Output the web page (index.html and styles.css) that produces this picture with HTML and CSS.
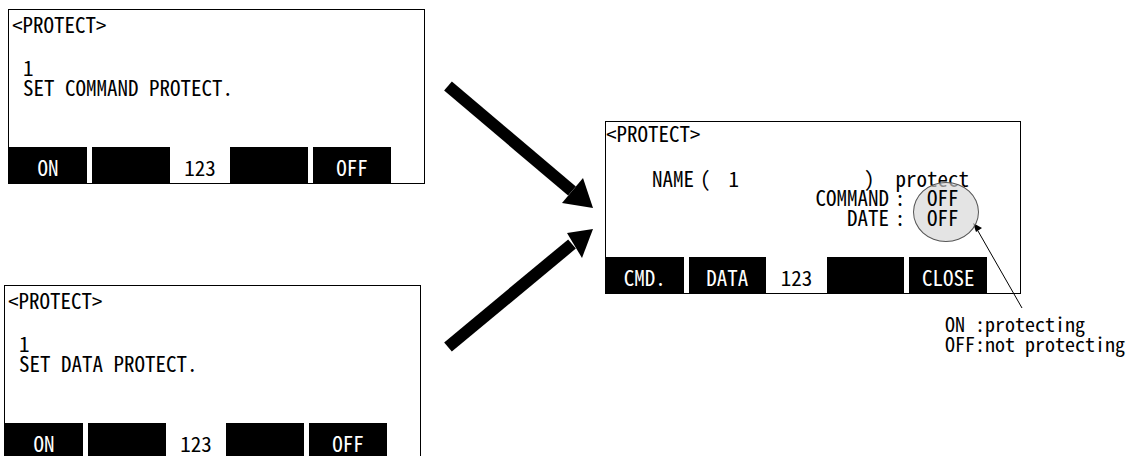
FILE: index.html
```html
<!DOCTYPE html>
<html>
  <head>
    <meta charset="utf-8" />
    <title>PROTECT</title>
    <link rel="stylesheet" href="styles.css">
  </head>

  <body>
    <div id="canvas">
      <!-- command protect screen -->
      <section class="panel" id="panel-cmd">
        <div class="screen">
          <div class="title">&lt;PROTECT&gt;</div>
          <div class="msg">
            <div>1</div>
            <div>SET COMMAND PROTECT.</div>
          </div>
        </div>
        <div class="keys">
          <span class="key">ON</span>
          <span class="key"></span>
          <span class="key num">123</span>
          <span class="key"></span>
          <span class="key">OFF</span>
        </div>
      </section>

      <!-- data protect screen -->
      <section class="panel" id="panel-data">
        <div class="screen">
          <div class="title">&lt;PROTECT&gt;</div>
          <div class="msg">
            <div>1</div>
            <div>SET DATA PROTECT.</div>
          </div>
        </div>
        <div class="keys">
          <span class="key">ON</span>
          <span class="key"></span>
          <span class="key num">123</span>
          <span class="key"></span>
          <span class="key">OFF</span>
        </div>
      </section>

      <!-- protect status screen -->
      <section class="panel" id="panel-status">
        <div class="screen">
          <div class="title">&lt;PROTECT&gt;</div>
          <div class="name-row">
            <span class="name">NAME</span>
            <span class="paren">(</span>
            <span class="num-val">1</span>
            <span class="paren close">)</span>
            <span class="protect">protect</span>
          </div>
          <div class="status">
            <span class="label">COMMAND</span><span class="colon">:</span><span class="val">OFF</span>
            <span class="label">DATE</span><span class="colon">:</span><span class="val">OFF</span>
          </div>
        </div>
        <div class="keys">
          <span class="key">CMD.</span>
          <span class="key">DATA</span>
          <span class="key num">123</span>
          <span class="key"></span>
          <span class="key">CLOSE</span>
        </div>
        <div class="circle"></div>
      </section>

      <svg class="arrows" width="1134" height="456" viewBox="0 0 1134 456">
        <!-- big arrow from command screen -->
        <line x1="448" y1="86" x2="572" y2="191" stroke="#000" stroke-width="12" />
        <polygon points="593,208 562,203 583,178" fill="#000" />
        <!-- big arrow from data screen -->
        <line x1="448" y1="347" x2="572" y2="244" stroke="#000" stroke-width="12" />
        <polygon points="593,229 567,233 582,258" fill="#000" />
        <!-- leader to circle -->
        <line x1="1022" y1="308" x2="978" y2="231" stroke="#000" stroke-width="1" />
        <polygon points="973,223 982,228 976,232" fill="#000" />
      </svg>

      <div class="legend">ON :protecting
OFF:not protecting</div>
    </div>
  </body>
</html>
```

FILE: styles.css
```css
body,
html {
  margin: 0;
  padding: 0;
  width: 100%;
  height: 100%;
  overflow: hidden;
  background: #fff;
}

#canvas {
  position: relative;
  width: 1134px;
  height: 456px;
  font-family: "Noto Sans CJK JP", "DejaVu Sans", sans-serif;
  font-feature-settings: "hwid" 1;
  font-size: 21px;
  line-height: 20px;
  color: #000;
}

/* LCD screen panels */
.panel {
  position: absolute;
  box-sizing: border-box;
  width: 417px;
  height: 175px;
  border: 1px solid #000;
  display: flex;
  flex-direction: column;
  justify-content: space-between;
}

#panel-cmd {
  left: 8px;
  top: 9px;
}

#panel-data {
  left: 4px;
  top: 285px;
}

#panel-status {
  left: 605px;
  top: 121px;
  width: 416px;
  height: 173px;
}

.screen {
  padding: 4px 0 0 3px;
}

#panel-status .screen {
  padding: 1px 0 0 0;
}

.msg {
  margin-top: 23px;
  padding-left: 11px;
}

.name-row {
  display: flex;
  margin-top: 25px;
  padding-left: 46px;
}

.name-row .paren {
  margin-left: 6px;
}

.name-row .num-val {
  margin-left: 18px;
}

.name-row .close {
  margin-left: 125px;
}

.name-row .protect {
  margin-left: 21px;
}

/* status sits above the highlight circle */
.status {
  position: relative;
  z-index: 2;
  display: grid;
  grid-template-columns: 283px 22px auto;
  line-height: 19.5px;
}

.status .label {
  text-align: right;
}

.status .colon {
  text-align: center;
}

.status .val {
  padding-left: 16px;
}

/* function keys */
.keys {
  display: flex;
  gap: 5px;
  height: 36px;
  padding-right: 33px;
}

.key {
  width: 78px;
  background: #000;
  color: #fff;
  text-align: center;
  line-height: 40px;
}

.key.num {
  width: 51px;
  background: none;
  color: #000;
}

.circle {
  position: absolute;
  z-index: 1;
  left: 307px;
  top: 60px;
  width: 64px;
  height: 58px;
  border: 1px solid #555;
  border-radius: 50%;
  background: rgba(214, 214, 214, 0.65);
}

.arrows {
  position: absolute;
  left: 0;
  top: 0;
  pointer-events: none;
}

.legend {
  position: absolute;
  left: 945px;
  top: 314px;
  font-size: 20px;
  line-height: 19.5px;
  white-space: pre;
}
```
